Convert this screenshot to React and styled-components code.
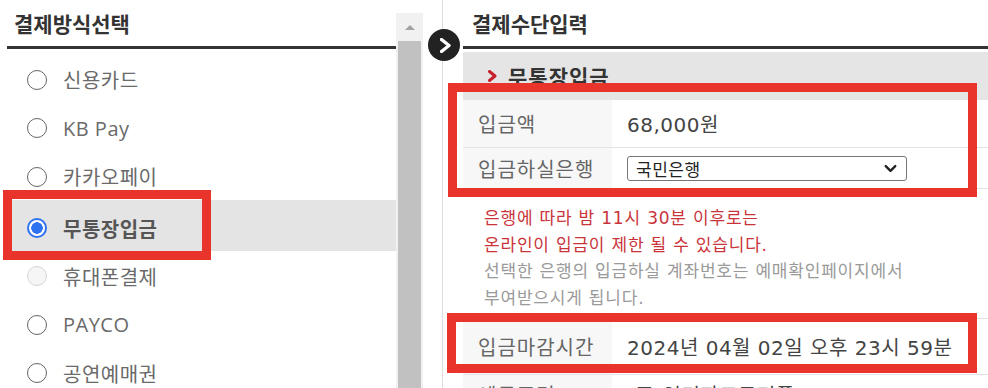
import styled, { createGlobalStyle } from "styled-components";
import { ChevronDown } from "lucide-react";

const GlobalStyle = createGlobalStyle`
  * { box-sizing: border-box; }
  body {
    margin: 0;
    background: #fff;
    font-family: "DejaVu Sans", "Noto Sans CJK KR", sans-serif;
  }
`;

const FONT = `"DejaVu Sans", "Noto Sans CJK KR", sans-serif`;

const Page = styled.div`
  position: relative;
  display: flex;
  width: 988px;
  height: 388px;
  overflow: hidden;
  font-family: ${FONT};
`;

const LeftPanel = styled.div`
  flex-shrink: 0;
  width: 442px;
  display: flex;
  padding-right: 19px;
`;

const LeftContent = styled.div`
  flex: 1;
  min-width: 0;
  padding-left: 7px;
`;

const SectionTitle = styled.h2`
  margin: 0;
  height: 49px;
  padding: 10px 0 0 ${(p) => p.$indent}px;
  border-bottom: 3px solid #333;
  font-size: 21px;
  line-height: 30px;
  font-weight: 700;
  color: #333;
`;

const MethodList = styled.ul`
  list-style: none;
  margin: 5px 0 0;
  padding: 0;
  font-family: "Open Sans", "Noto Sans CJK KR", sans-serif;
`;

const MethodItem = styled.li`
  height: ${(p) => (p.$active ? 51 : 48.5)}px;
  display: flex;
  align-items: center;
  gap: 16px;
  padding: ${(p) => (p.$active ? 6 : 3)}px 0 0 20px;
  background: ${(p) => (p.$active ? "#e4e4e4" : "transparent")};
  font-size: 20px;
  letter-spacing: 0.5px;
  color: ${(p) => (p.$active ? "#555" : "#6a6a6a")};
  font-weight: ${(p) => (p.$active ? 700 : 400)};
`;

const Radio = styled.span`
  flex-shrink: 0;
  width: 20px;
  height: 20px;
  border-radius: 50%;
  border: ${(p) =>
    p.$checked
      ? "2px solid #2f72f0"
      : p.$disabled
        ? "1.5px solid #d4d4d4"
        : "1.7px solid #666"};
  background: ${(p) =>
    p.$checked
      ? "radial-gradient(circle, #2f72f0 0 5.5px, #fff 6px)"
      : p.$disabled
        ? "#f6f6f6"
        : "#fff"};
`;

const Scrollbar = styled.div`
  width: 27px;
  margin-top: 13px;
  display: flex;
  flex-direction: column;
  background: #f1f1f1;
`;

const ScrollUp = styled.div`
  height: 28px;
  display: flex;
  align-items: center;
  justify-content: center;

  &::before {
    content: "";
    border-left: 5px solid transparent;
    border-right: 5px solid transparent;
    border-bottom: 5px solid #a3a3a3;
  }
`;

const ScrollThumb = styled.div`
  flex: 1;
  margin: 0 2px;
  background: #c1c1c1;
`;

const RightPanel = styled.div`
  flex: 1;
  min-width: 0;
  border-left: 1px solid #dedede;
  padding-left: 20px;
`;

const MethodHeader = styled.div`
  margin-top: 3px;
  height: 48px;
  display: flex;
  align-items: center;
  gap: 11px;
  padding-left: 25px;
  background: #e5e5e5;
  font-size: 21px;
  letter-spacing: 1px;
  font-weight: 700;
  color: #333;
`;

const Row = styled.div`
  display: grid;
  grid-template-columns: 149px 1fr;
  height: ${(p) => p.$h}px;
  border-top: ${(p) => (p.$top ? "1px solid #e3e3e3" : "none")};
  border-bottom: 1px solid #e3e3e3;
`;

const Label = styled.div`
  display: flex;
  align-items: center;
  padding-left: 15px;
  background: #f7f7f7;
  font-size: 20px;
  letter-spacing: 1px;
  color: #666;
`;

const Value = styled.div`
  display: flex;
  align-items: center;
  padding-left: 15px;
  font-size: 20px;
  letter-spacing: 0.5px;
  color: #444;
`;

const SelectBox = styled.div`
  width: 280px;
  height: 25px;
  display: flex;
  align-items: center;
  justify-content: space-between;
  padding: 0 6px 0 8px;
  border: 1px solid #767676;
  border-radius: 3px;
  font-size: 17px;
  letter-spacing: 0.5px;
  color: #222;
`;

const Notes = styled.div`
  padding: 16px 0 6px 21px;
  font-size: 17px;
  line-height: 26.7px;
  letter-spacing: 0.8px;
`;

const NoteLine = styled.div`
  color: ${(p) => (p.$warn ? "#c9343b" : "#9a9a9a")};
`;

const ToggleButton = styled.div`
  position: absolute;
  left: 428px;
  top: 29px;
  width: 32px;
  height: 32px;
  border-radius: 50%;
  background: #222;
  display: flex;
  align-items: center;
  justify-content: center;
  padding-left: 2px;
`;

const Highlight = styled.div`
  position: absolute;
  left: ${(p) => p.$x}px;
  top: ${(p) => p.$y}px;
  width: ${(p) => p.$w}px;
  height: ${(p) => p.$h}px;
  border: 9px solid #e8342a;
  pointer-events: none;
`;

function Chevron({ w, h, color, stroke }) {
  return (
    <svg width={w} height={h} viewBox={`0 0 ${w} ${h}`}>
      <polyline
        points={`1.5,1.5 ${w - 2},${h / 2} 1.5,${h - 1.5}`}
        fill="none"
        stroke={color}
        strokeWidth={stroke}
        strokeLinecap="round"
        strokeLinejoin="round"
      />
    </svg>
  );
}

const methods = [
  { name: "신용카드" },
  { name: "KB Pay" },
  { name: "카카오페이" },
  { name: "무통장입금", checked: true },
  { name: "휴대폰결제", disabled: true },
  { name: "PAYCO" },
  { name: "공연예매권" },
];

export default function App() {
  return (
    <Page>
      <GlobalStyle />
      <LeftPanel>
        <LeftContent>
          <SectionTitle $indent={7}>결제방식선택</SectionTitle>
          <MethodList>
            {methods.map((m) => (
              <MethodItem key={m.name} $active={m.checked}>
                <Radio $checked={m.checked} $disabled={m.disabled} />
                {m.name}
              </MethodItem>
            ))}
          </MethodList>
        </LeftContent>
        <Scrollbar>
          <ScrollUp />
          <ScrollThumb />
        </Scrollbar>
      </LeftPanel>

      <RightPanel>
        <SectionTitle $indent={9}>결제수단입력</SectionTitle>
        <MethodHeader>
          <Chevron w={9} h={12} color="#c8202a" stroke={3} />
          무통장입금
        </MethodHeader>
        <Row $h={48}>
          <Label>입금액</Label>
          <Value>68,000원</Value>
        </Row>
        <Row $h={41}>
          <Label>입금하실은행</Label>
          <Value>
            <SelectBox>
              국민은행
              <ChevronDown size={19} strokeWidth={3} color="#222" />
            </SelectBox>
          </Value>
        </Row>
        <Notes>
          <NoteLine $warn>은행에 따라 밤 11시 30분 이후로는</NoteLine>
          <NoteLine $warn>온라인이 입금이 제한 될 수 있습니다.</NoteLine>
          <NoteLine>선택한 은행의 입금하실 계좌번호는 예매확인페이지에서</NoteLine>
          <NoteLine>부여받으시게 됩니다.</NoteLine>
        </Notes>
        <Row $h={57} $top>
          <Label>입금마감시간</Label>
          <Value>2024년 04월 02일 오후 23시 59분</Value>
        </Row>
        <Row $h={40}>
          <Label>예금주명</Label>
          <Value>(주)인터파크트리플</Value>
        </Row>
      </RightPanel>

      <ToggleButton>
        <Chevron w={11} h={15} color="#fff" stroke={3.4} />
      </ToggleButton>

      <Highlight $x={448} $y={83} $w={529} $h={114} />
      <Highlight $x={3} $y={190} $w={208} $h={70} />
      <Highlight $x={447} $y={313} $w={530} $h={60} />
    </Page>
  );
}
